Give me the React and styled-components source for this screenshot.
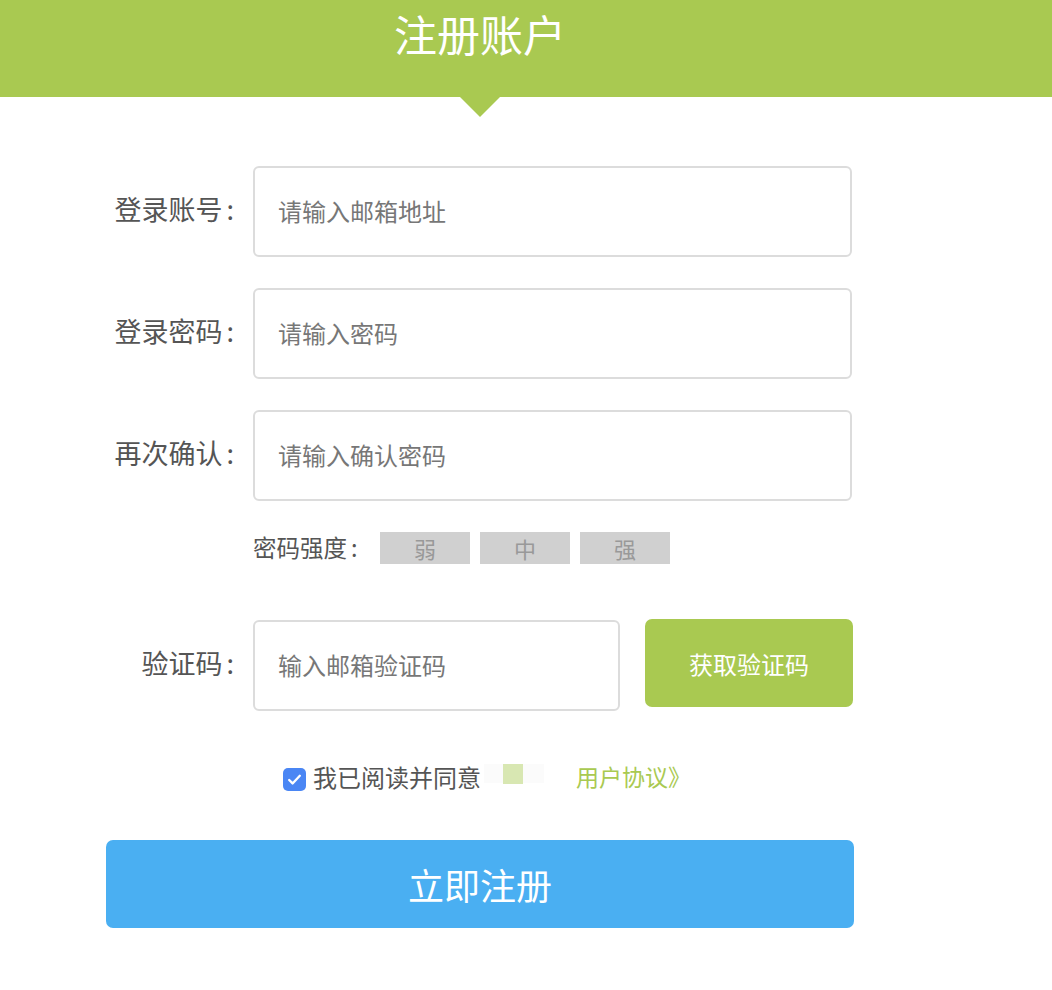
import React from 'react';
import styled, { createGlobalStyle } from 'styled-components';

const GlobalStyle = createGlobalStyle`
  body {
    margin: 0;
    background: #fff;
    font-family: "Noto Sans CJK SC", "Noto Sans", sans-serif;
  }
`;

const green = '#a9c951';

const Header = styled.header`
  background: ${green};
  height: 97px;
`;

const HeaderInner = styled.div`
  position: relative;
  width: 960px;
  height: 100%;
  text-align: center;
  &::after {
    content: "";
    position: absolute;
    left: 460px;
    top: 97px;
    border-left: 20px solid transparent;
    border-right: 20px solid transparent;
    border-top: 20px solid ${green};
  }
`;

const Title = styled.h1`
  margin: 0;
  padding-top: 5px;
  font-size: 43px;
  line-height: 56px;
  font-weight: 400;
  color: #fff;
`;

const Form = styled.form`
  width: 960px;
  padding-top: 69px;
`;

const Row = styled.div`
  display: flex;
  align-items: ${p => p.$align || 'center'};
  margin-top: ${p => p.$top || 0}px;
`;

const Label = styled.label`
  width: 234px;
  margin-right: 19px;
  text-align: right;
  font-size: 27px;
  line-height: 36px;
  color: #555;
  white-space: nowrap;
  align-self: center;
  margin-top: -5px;
`;

const Colon = styled.span`
  margin-left: 4px;
`;

const Input = styled.input`
  box-sizing: border-box;
  width: ${p => p.$w || 599}px;
  height: 91px;
  border: 2px solid #dcdcdc;
  border-radius: 6px;
  padding: 0 23px 2px;
  font-family: inherit;
  font-size: 24px;
  color: #333;
  outline: none;
  &::placeholder {
    color: #777;
  }
`;

const Strength = styled.div`
  display: flex;
  align-items: center;
  margin: 31px 0 0 253px;
  height: 32px;
`;

const StrengthLabel = styled.span`
  width: 127px;
  font-size: 23.5px;
  color: #555;
  white-space: nowrap;
  margin-top: -3px;
`;

const Level = styled.span`
  width: 90px;
  height: 32px;
  margin-right: 10px;
  background: #d0d0d0;
  color: #999;
  font-size: 22px;
  line-height: 32px;
  text-align: center;
`;

const CodeButton = styled.button`
  width: 208px;
  height: 88px;
  margin-left: 25px;
  margin-top: -1px;
  border: none;
  border-radius: 7px;
  background: ${green};
  color: #fff;
  font-family: inherit;
  font-size: 24px;
  cursor: pointer;
`;

const Agree = styled.div`
  display: flex;
  align-items: center;
  height: 32px;
  margin: 49px 0 0 283px;
  font-size: 24px;
  color: #555;
`;

const CheckBox = styled.span`
  display: inline-flex;
  align-items: center;
  justify-content: center;
  width: 23px;
  height: 23px;
  margin: 6px 7px 0 0;
  border-radius: 5px;
  background: #4a86f4;
`;

const Blank = styled.span`
  display: inline-flex;
  align-items: flex-start;
  width: 60px;
  height: 19px;
  margin: -6px 0 0 3px;
  background: #fbfbfb;
`;

const Square = styled.span`
  width: 20px;
  height: 20px;
  margin-left: 19px;
  background: #d8e7b2;
`;

const Link = styled.a`
  margin-left: 32px;
  font-size: 23px;
  color: ${green};
  text-decoration: none;
`;

const Submit = styled.button`
  display: block;
  width: 748px;
  height: 88px;
  margin: 48px 0 0 106px;
  border: none;
  border-radius: 7px;
  background: #4aaff2;
  color: #fff;
  font-family: inherit;
  font-size: 36px;
  cursor: pointer;
`;

const fields = [
  { label: '登录账号', placeholder: '请输入邮箱地址', type: 'text' },
  { label: '登录密码', placeholder: '请输入密码', type: 'password' },
  { label: '再次确认', placeholder: '请输入确认密码', type: 'password' },
];

export default function App() {
  return (
    <>
      <GlobalStyle />
      <Header>
        <HeaderInner>
          <Title>注册账户</Title>
        </HeaderInner>
      </Header>
      <Form onSubmit={e => e.preventDefault()}>
        {fields.map((f, i) => (
          <Row key={f.label} $top={i ? 31 : 0}>
            <Label>{f.label}<Colon>:</Colon></Label>
            <Input type={f.type} placeholder={f.placeholder} />
          </Row>
        ))}
        <Strength>
          <StrengthLabel>密码强度<Colon>:</Colon></StrengthLabel>
          <Level>弱</Level>
          <Level>中</Level>
          <Level>强</Level>
        </Strength>
        <Row $top={56} $align="flex-start">
          <Label>验证码<Colon>:</Colon></Label>
          <Input $w={367} placeholder="输入邮箱验证码" />
          <CodeButton type="button">获取验证码</CodeButton>
        </Row>
        <Agree>
          <CheckBox>
            <svg width="17" height="17" viewBox="0 0 16 16">
              <path d="M3 8.5l3.2 3.2L13 4.5" fill="none" stroke="#fff" strokeWidth="2.2" strokeLinecap="round" strokeLinejoin="round" />
            </svg>
          </CheckBox>
          我已阅读并同意
          <Blank><Square /></Blank>
          <Link href="#">用户协议》</Link>
        </Agree>
        <Submit type="submit">立即注册</Submit>
      </Form>
    </>
  );
}
